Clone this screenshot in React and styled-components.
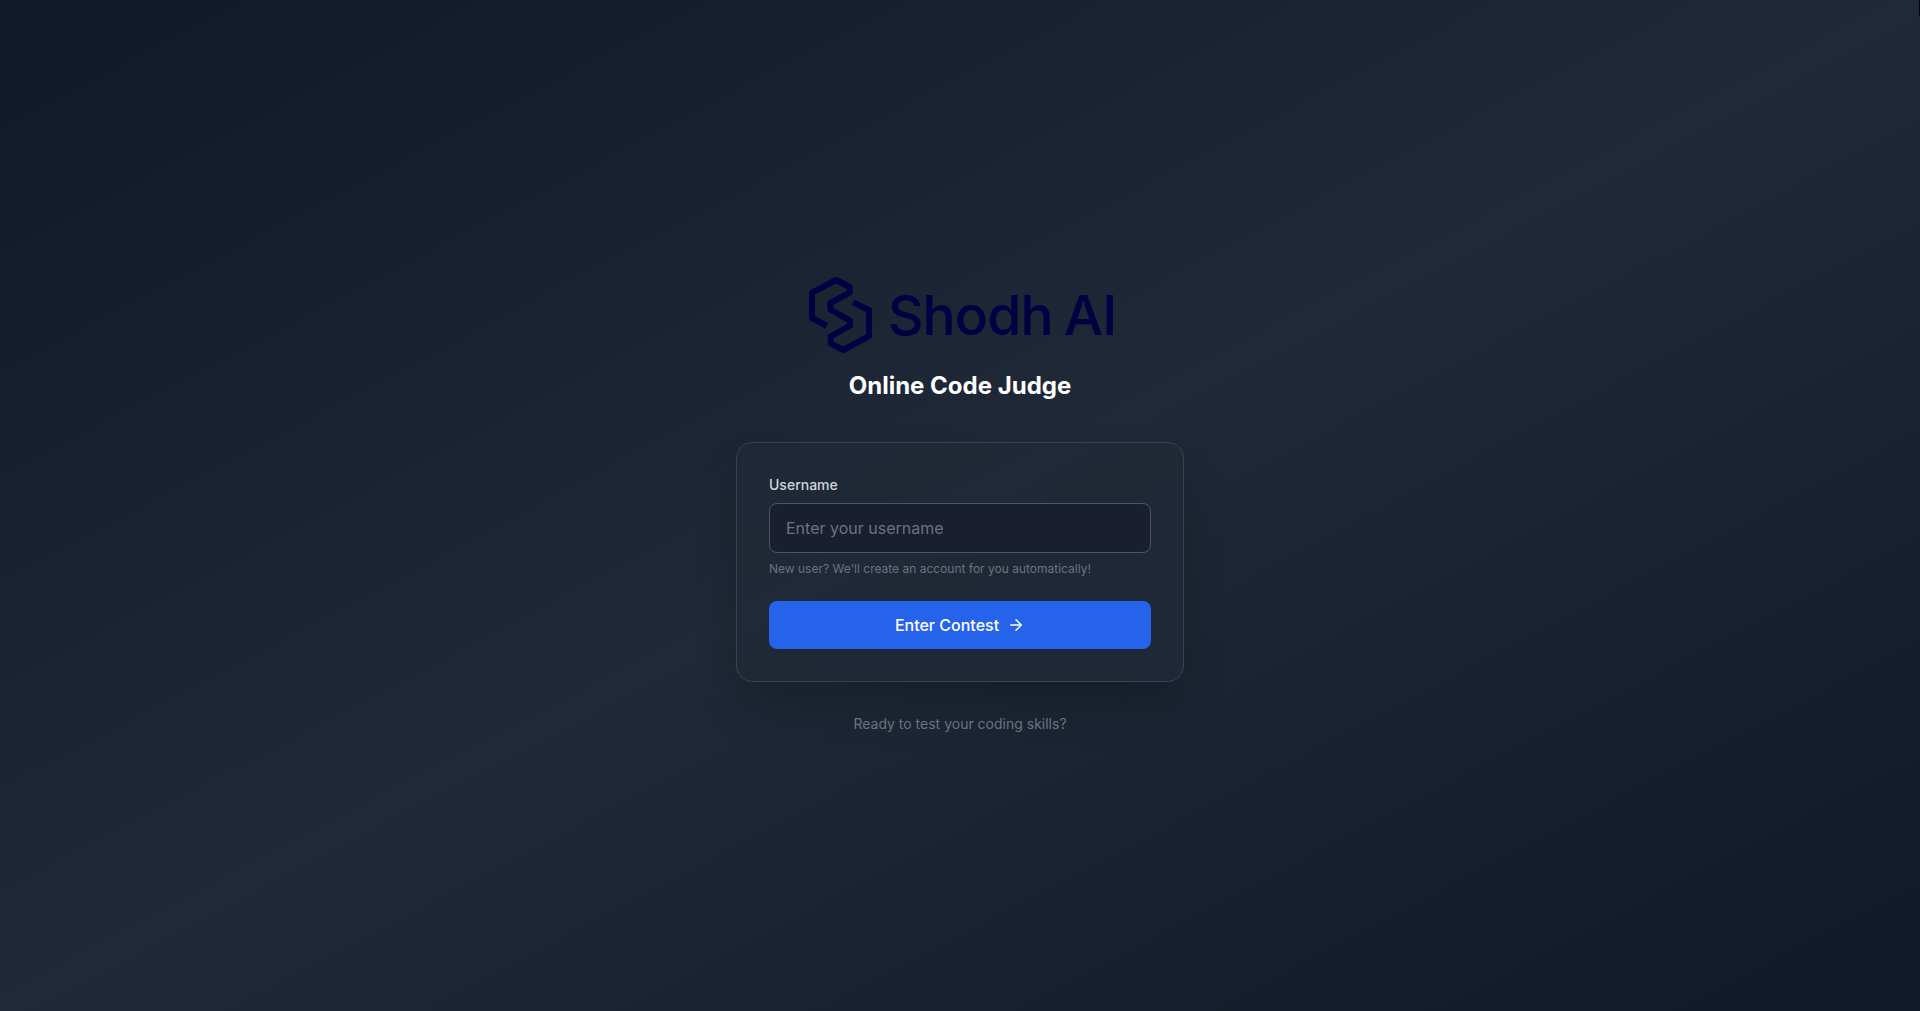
import React, { useState } from "react";
import styled, { createGlobalStyle } from "styled-components";
import { ArrowRight } from "lucide-react";

const GlobalStyle = createGlobalStyle`
  *, *::before, *::after { box-sizing: border-box; }
  body {
    margin: 0;
    font-family: Inter, "Liberation Sans", sans-serif;
    line-height: 1.5;
    background: #111827;
  }
`;

const Page = styled.main`
  position: relative;
  min-height: 100vh;
  display: flex;
  align-items: center;
  justify-content: center;
  background: linear-gradient(to bottom right, #111827, #1f2937, #111827);
`;

const EdgeMark = styled.span`
  position: absolute;
  top: 0;
  right: 0;
  width: 1px;
  height: 16px;
  background: #020617;
`;

const Content = styled.div`
  width: 448px;
  display: flex;
  flex-direction: column;
  align-items: center;
`;

const Logo = styled.svg`
  display: block;
  width: 306px;
  height: 77px;
  margin-bottom: 16px;
  overflow: visible;
`;

const Wordmark = styled.text`
  font-family: Inter, "Liberation Sans", sans-serif;
  font-size: 55px;
  font-weight: 500;
  fill: #000042;
  stroke: #000042;
  stroke-width: 0.15px;
`;

const Title = styled.h1`
  margin: 0 0 40px;
  font-size: 24px;
  line-height: 32px;
  font-weight: 700;
  color: #fff;
`;

const Card = styled.form`
  width: 100%;
  display: flex;
  flex-direction: column;
  padding: 32px;
  border: 1px solid #374151;
  border-radius: 16px;
  background: rgba(31, 41, 55, 0.8);
  box-shadow: 0 25px 50px -12px rgba(0, 0, 0, 0.25);
`;

const Label = styled.label`
  margin-bottom: 8px;
  font-size: 14px;
  line-height: 20px;
  font-weight: 500;
  color: #d1d5db;
`;

const Input = styled.input`
  width: 100%;
  height: 50px;
  padding: 12px 16px;
  border: 1px solid #4b5563;
  border-radius: 8px;
  outline: none;
  background: #191f2e;
  font: inherit;
  font-size: 16px;
  color: #fff;
  &::placeholder { color: #6b7280; opacity: 1; }
`;

const Hint = styled.p`
  margin: 8px 0 24px;
  font-size: 12px;
  line-height: 16px;
  color: #6b7280;
`;

const SubmitButton = styled.button`
  height: 48px;
  display: flex;
  align-items: center;
  justify-content: center;
  gap: 8px;
  border: 0;
  border-radius: 8px;
  background: #2563eb;
  font: inherit;
  font-size: 16px;
  font-weight: 500;
  color: #fff;
  cursor: pointer;
`;

const Footer = styled.p`
  margin: 32px 0 0;
  font-size: 14px;
  line-height: 20px;
  color: #6b7280;
`;

function ShodhLogo() {
  return (
    <Logo viewBox="0 0 306 77" role="img" aria-label="Shodh AI">
      <path
        transform="translate(-11 -13) scale(0.33333)"
        d="M92.5 186 L48 162 V86 L121 48 L161 69 V86 L103 117 V136 L162 170 V185 L104 217 V238 L142 258 L219 216 V138 L171 115"
        fill="none"
        stroke="#000042"
        strokeWidth="18"
        strokeLinejoin="round"
      />
      <Wordmark x="81 115.5 147.7 180.2 213.4 257 295.2" y="58">ShodhAI</Wordmark>
    </Logo>
  );
}

export default function App() {
  const [username, setUsername] = useState("");
  return (
    <>
      <GlobalStyle />
      <Page>
        <EdgeMark />
        <Content>
          <ShodhLogo />
          <Title>Online Code Judge</Title>
          <Card onSubmit={(e) => e.preventDefault()}>
            <Label htmlFor="username">Username</Label>
            <Input
              id="username"
              placeholder="Enter your username"
              value={username}
              onChange={(e) => setUsername(e.target.value)}
            />
            <Hint>New user? We'll create an account for you automatically!</Hint>
            <SubmitButton type="submit">
              Enter Contest
              <ArrowRight size={18} />
            </SubmitButton>
          </Card>
          <Footer>Ready to test your coding skills?</Footer>
        </Content>
      </Page>
    </>
  );
}
